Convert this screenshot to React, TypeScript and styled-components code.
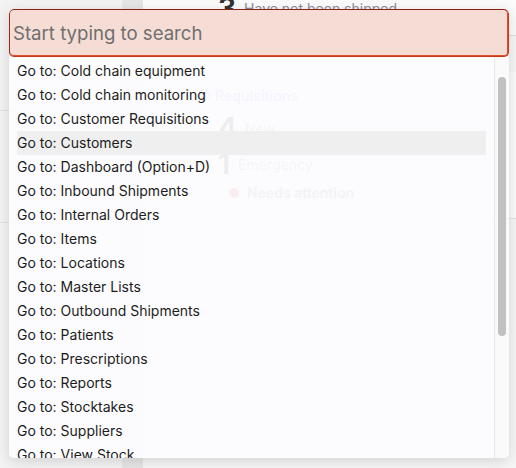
import styled, { createGlobalStyle } from 'styled-components';
import { Package } from 'lucide-react';

const GlobalStyle = createGlobalStyle`
    html, body {
        margin: 0;
        padding: 0;
        height: 100%;
        overflow: hidden;
        font-family: Inter, 'Noto Sans', sans-serif;
    }
`;

const commands: string[] = [
    'Go to: Cold chain equipment',
    'Go to: Cold chain monitoring',
    'Go to: Customer Requisitions',
    'Go to: Customers',
    'Go to: Dashboard (Option+D)',
    'Go to: Inbound Shipments',
    'Go to: Internal Orders',
    'Go to: Items',
    'Go to: Locations',
    'Go to: Master Lists',
    'Go to: Outbound Shipments',
    'Go to: Patients',
    'Go to: Prescriptions',
    'Go to: Reports',
    'Go to: Stocktakes',
    'Go to: Suppliers',
    'Go to: View Stock',
    'Go to: Settings',
    'Go to: Sync',
    'Change store',
    'Help',
    'Toggle theme',
    'Log out',
];

const activeIndex = 3;

export default function App() {
    return (
        <Page>
            <GlobalStyle />
            <Dashboard>
                <Sidebar>
                    <NavGroup $height={110} />
                    <NavGroup $height={111} />
                </Sidebar>
                <Gutter />
                <Main>
                    <Card $offset={-19}>
                        <StatRow>
                            <StatNumber>3</StatNumber>
                            <StatLabel>Have not been shipped</StatLabel>
                        </StatRow>
                    </Card>
                    <Card $offset={36}>
                        <CardHeader>
                            <Package size={14} strokeWidth={1.8} />
                            Requisitions
                        </CardHeader>
                        <StatList>
                            <StatRow>
                                <StatNumber>4</StatNumber>
                                <StatLabel>New</StatLabel>
                            </StatRow>
                            <StatRow>
                                <StatNumber>1</StatNumber>
                                <StatLabel>Emergency</StatLabel>
                            </StatRow>
                        </StatList>
                        <AlertPill>
                            <AlertDot />
                            Needs attention
                        </AlertPill>
                    </Card>
                </Main>
            </Dashboard>
            <Palette>
                <SearchInput placeholder="Start typing to search" />
                <ResultBody>
                    <ResultList>
                        {commands.map((command, index) => (
                            <ResultItem key={command} $active={index === activeIndex}>
                                {command}
                            </ResultItem>
                        ))}
                    </ResultList>
                    <ScrollTrack>
                        <ScrollThumb />
                    </ScrollTrack>
                </ResultBody>
            </Palette>
        </Page>
    );
}

const Page = styled.div`
    position: relative;
    width: 100vw;
    height: 100vh;
    overflow: hidden;
    background-color: #f4f4f4;
`;
const Dashboard = styled.div`
    display: flex;
    height: 100%;
`;
const Sidebar = styled.div`
    width: 122px;
    flex-shrink: 0;
    background-color: #f3f3f3;
`;
const NavGroup = styled.div<{ $height: number }>`
    height: ${(p) => p.$height}px;
    border-bottom: 1px solid #e2e2e2;
`;
const Gutter = styled.div`
    width: 21px;
    flex-shrink: 0;
    background-color: #e6e6e6;
`;
const Main = styled.div`
    flex: 1;
    display: flex;
    flex-direction: column;
    background-color: #f6f6f6;
`;
const Card = styled.div<{ $offset: number }>`
    margin-top: ${(p) => p.$offset}px;
    padding: 13px 0 13px 57px;
    background-color: #fbfbfb;
    border-bottom: 1px solid #e2e2e2;
`;
const CardHeader = styled.div`
    display: flex;
    align-items: center;
    gap: 4px;
    height: 20px;
    margin-left: -3px;
    font-size: 14px;
    font-weight: 600;
    color: #9090ee;
`;
const StatList = styled.div`
    display: flex;
    flex-direction: column;
    gap: 8px;
    margin-top: 9px;
`;
const StatRow = styled.div`
    display: flex;
    align-items: center;
    gap: 8px;
    height: 28px;
    margin-left: 18px;
`;
const StatNumber = styled.span`
    font-size: 28px;
    font-weight: 700;
    line-height: 28px;
    color: #333333;
`;
const StatLabel = styled.span`
    font-size: 14px;
    color: #8c8c9a;
`;
const AlertPill = styled.div`
    display: inline-flex;
    align-self: flex-start;
    align-items: center;
    gap: 8px;
    width: fit-content;
    height: 25px;
    margin-top: 2px;
    margin-left: 18px;
    padding: 0 16px 0 11px;
    border-radius: 13px;
    background-color: #fde6e6;
    font-size: 14px;
    font-weight: 600;
    color: #808080;
`;
const AlertDot = styled.span`
    width: 10px;
    height: 10px;
    border-radius: 50%;
    background-color: #e63535;
`;
const Palette = styled.div`
    position: absolute;
    top: 9px;
    left: 9px;
    width: 500px;
    height: 449px;
    display: flex;
    flex-direction: column;
    border-radius: 5px;
    overflow: hidden;
    box-shadow: 0 3px 14px rgba(0, 0, 0, 0.14);
`;
const SearchInput = styled.input`
    box-sizing: border-box;
    flex-shrink: 0;
    width: 100%;
    height: 48px;
    margin: 0;
    padding: 0 3px;
    border: 1px solid #c8391c;
    border-top-color: #8c2216;
    border-left-color: #a02a18;
    border-radius: 5px;
    box-shadow: inset 0 -1px 0 #db5030, inset -1px 0 0 #db5030;
    background-color: #f5ddd6;
    font-family: Inter, 'Noto Sans', sans-serif;
    font-size: 18.6px;
    color: #222222;
    outline: none;

    &::placeholder {
        color: #6f6f6f;
    }
`;
const ResultBody = styled.div`
    flex: 1;
    min-height: 0;
    display: flex;
    background-color: rgba(252, 252, 254, 0.93);
`;
const ResultList = styled.div`
    flex: 1;
    min-width: 0;
    overflow: hidden;
    padding: 2px 8px 5px;
`;
const ResultItem = styled.div<{ $active: boolean }>`
    height: 24px;
    line-height: 24px;
    font-size: 14px;
    color: #1c1c1c;
    white-space: nowrap;
    background-color: ${(p) => (p.$active ? '#efefef' : 'transparent')};
`;
const ScrollTrack = styled.div`
    width: 14px;
    flex-shrink: 0;
    padding-top: 20px;
    background-color: #fafafa;
    border-left: 1px solid #e6e6e6;
`;
const ScrollThumb = styled.div`
    width: 8px;
    height: 259px;
    margin-left: 3px;
    border-radius: 4px;
    background-color: #c1c1c1;
`;
